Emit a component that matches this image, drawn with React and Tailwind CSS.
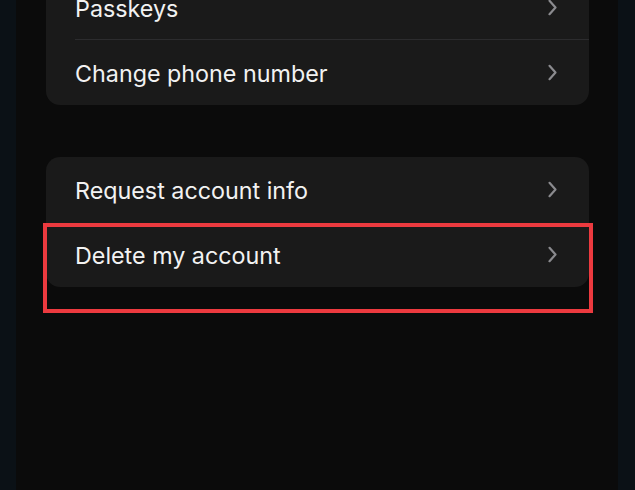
const Chevron = () => (
  <svg width="11" height="17" viewBox="0 0 11 17" fill="none" className="shrink-0">
    <path d="M2.5 1.8 L8.5 8.5 L2.5 15.2" stroke="#8a8a8e" strokeWidth="2.2" strokeLinecap="round" strokeLinejoin="round" />
  </svg>
);

function Row({ label, divider }) {
  return (
    <div className="relative flex h-[65px] items-center pl-[29px] pr-[31px]">
      <span className="flex-1 pt-[3px] text-[23.3px] leading-none text-[#f2f2f2]">{label}</span>
      <Chevron />
      {divider && <div className="absolute bottom-0 left-[29px] right-0 h-px bg-[#2c2c2e]" />}
    </div>
  );
}

export default function App() {
  return (
    <div
      className="flex h-[490px] w-[635px] overflow-hidden bg-[#0b1116] pl-[16px] pr-[17px]"
      style={{ fontFamily: "Inter, 'Noto Sans', sans-serif" }}
    >
      <div className="flex h-full flex-1 flex-col bg-[#0b0b0b] pl-[30px] pr-[29px]">
        <div className="-mt-[25px] overflow-hidden rounded-[14px] bg-[#1a1a1a]">
          <Row label="Passkeys" divider />
          <Row label="Change phone number" />
        </div>

        <div className="relative mt-[52px] rounded-[14px] bg-[#1a1a1a]">
          <Row label="Request account info" />
          <Row label="Delete my account" />
          <div className="absolute -left-[3px] top-[66px] h-[90px] w-[550px] border-[4px] border-[#ec3a3f]" />
        </div>
      </div>
    </div>
  );
}
